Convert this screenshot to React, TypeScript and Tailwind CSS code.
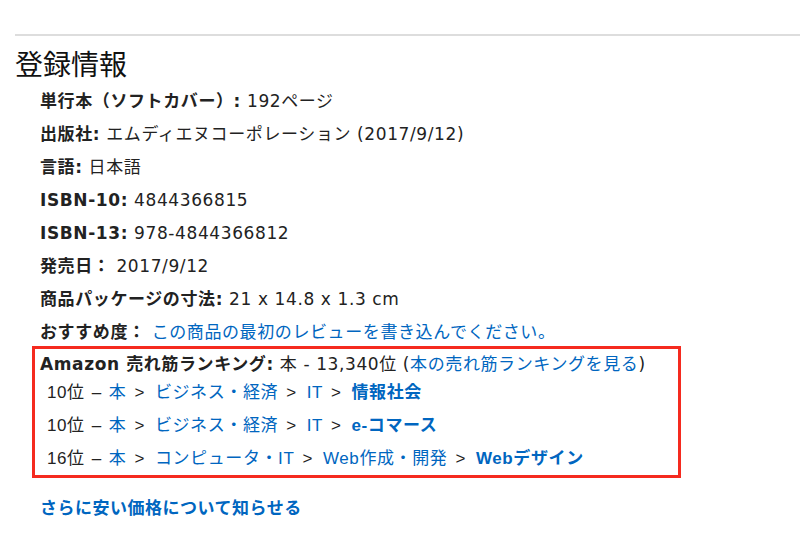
import React from "react";

const main = { fontFamily: '"DejaVu Sans", "Noto Sans CJK JP", sans-serif' };
const alt = { fontFamily: '"Liberation Sans", "Noto Sans CJK JP", sans-serif' };

function Row({ label, children }: { label: string; children: React.ReactNode }) {
  return (
    <li className="h-[33px] flex items-center whitespace-nowrap">
      <b className="font-bold">{label}</b>
      <span>{children}</span>
    </li>
  );
}

function Link({ children, bold }: { children: React.ReactNode; bold?: boolean }) {
  return <a className={`text-[#0066c0] ${bold ? "font-bold" : ""}`}>{children}</a>;
}

function Sep() {
  return <span className="ml-[8px] mr-[10px]">&gt;</span>;
}

function RankRow({ rank, path, last }: { rank: string; path: string[]; last: string }) {
  return (
    <li className="h-[33px] flex items-center whitespace-nowrap">
      <span>{rank}</span>
      <span className="mx-[7px]">–</span>
      <Link>本</Link>
      {path.map((p) => (
        <React.Fragment key={p}>
          <Sep />
          <Link>{p}</Link>
        </React.Fragment>
      ))}
      <Sep />
      <Link bold>{last}</Link>
    </li>
  );
}

export default function App() {
  return (
    <div className="w-[800px] h-[547px] bg-white text-[#222] overflow-hidden" style={main}>
      <div className="pt-[34px] pl-[15px]">
        <div className="h-[2px] bg-[#dddddd]" />
        <h2
          className="text-[28px] leading-[34px] mt-[10px] font-normal text-[#111]"
          style={{ fontFamily: '"Noto Sans CJK JP", sans-serif' }}
        >
          登録情報
        </h2>
        <ul className="pl-[25px] mt-[5px] text-[17px] tracking-[0.6px]">
          <Row label="単行本（ソフトカバー）:">&nbsp;192ページ</Row>
          <Row label="出版社:">&nbsp;エムディエヌコーポレーション (2017/9/12)</Row>
          <Row label="言語:">&nbsp;日本語</Row>
          <Row label="ISBN-10:">&nbsp;4844366815</Row>
          <Row label="ISBN-13:">&nbsp;978-4844366812</Row>
          <Row label="発売日：">&nbsp;2017/9/12</Row>
          <Row label="商品パッケージの寸法:">&nbsp;21 x 14.8 x 1.3 cm</Row>
          <Row label="おすすめ度：">
            &nbsp;<Link>この商品の最初のレビューを書き込んでください。</Link>
          </Row>
        </ul>
        <div className="ml-[17px] mt-[-3px] w-[649px] h-[132px] border-[3px] border-[#f52a1f] pl-[5px] text-[17px] tracking-[0.6px]">
          <div className="h-[27px] pt-[5px] flex items-center whitespace-nowrap">
            <b>Amazon 売れ筋ランキング:</b>&nbsp;本 - 13,340位 (<Link>本の売れ筋ランキングを見る</Link>)
          </div>
          <ul className="pl-[7px]" style={alt}>
            <RankRow rank="10位" path={["ビジネス・経済", "IT"]} last="情報社会" />
            <RankRow rank="10位" path={["ビジネス・経済", "IT"]} last="e-コマース" />
            <RankRow rank="16位" path={["コンピュータ・IT", "Web作成・開発"]} last="Webデザイン" />
          </ul>
        </div>
        <div className="pl-[25px] mt-[19px] leading-[22px] text-[17px] tracking-[0.5px] font-bold text-[#0066c0]">
          さらに安い価格について知らせる
        </div>
      </div>
    </div>
  );
}
